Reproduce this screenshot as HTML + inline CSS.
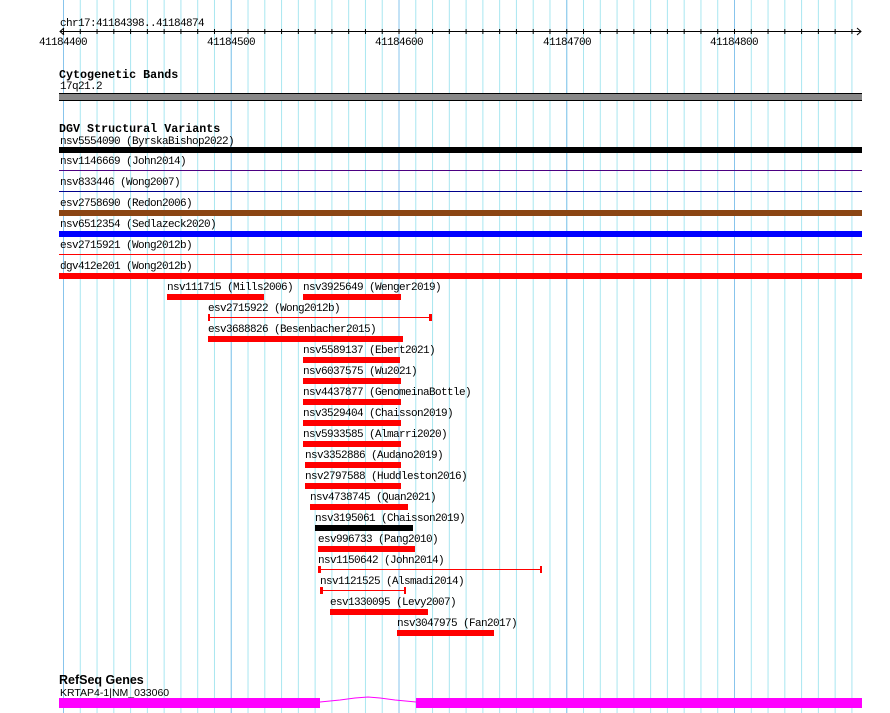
<!DOCTYPE html>
<html><head><meta charset="utf-8"><style>
html,body{margin:0;padding:0;background:#fff;width:890px;height:713px;overflow:hidden}
svg{display:block}
text{font-family:"Liberation Mono",monospace;font-size:11px;letter-spacing:-0.6px;fill:#000}
.b{font-weight:bold;font-size:11.7px;letter-spacing:0}
</style></head><body>
<svg width="890" height="713" viewBox="0 0 890 713" xmlns="http://www.w3.org/2000/svg">
<defs>
<pattern id="g" x="63" y="0" width="16.775" height="713" patternUnits="userSpaceOnUse"><rect x="0" y="0" width="1" height="713" fill="#a8e6f0"/></pattern>
<pattern id="t" x="63" y="0" width="16.775" height="713" patternUnits="userSpaceOnUse"><rect x="0" y="0" width="1" height="713" fill="#000"/></pattern>
</defs>
<rect x="63" y="0" width="799" height="713" fill="url(#g)"/>
<g fill="#88c4ec"><rect x="63" y="0" width="1" height="713"/><rect x="230.75" y="0" width="1" height="713"/><rect x="398.5" y="0" width="1" height="713"/><rect x="566.25" y="0" width="1" height="713"/><rect x="734" y="0" width="1" height="713"/></g>
<text x="60" y="26">chr17:41184398..41184874</text>
<rect x="60" y="31" width="801" height="1" fill="#000"/>
<rect x="63" y="29" width="795" height="5" fill="url(#t)"/>
<path d="M64 28 L60 31.5 L64 35 M857 28 L861 31.5 L857 35" stroke="#000" fill="none"/>
<text x="39" y="45">41184400</text><text x="207" y="45">41184500</text><text x="375" y="45">41184600</text><text x="543" y="45">41184700</text><text x="710" y="45">41184800</text>
<text x="59" y="78" class="b">Cytogenetic Bands</text>
<text x="60" y="89">17q21.2</text>
<rect x="59" y="93" width="803" height="8" fill="#000"/><rect x="59" y="94" width="803" height="6" fill="#888"/>
<text x="59" y="132" class="b">DGV Structural Variants</text>
<text x="60" y="144">nsv5554090 (ByrskaBishop2022)</text>
<rect x="59" y="147" width="803" height="6" fill="#000"/>
<text x="60" y="164">nsv1146669 (John2014)</text>
<rect x="59" y="170" width="803" height="1" fill="#4b0082"/>
<text x="60" y="185">nsv833446 (Wong2007)</text>
<rect x="59" y="191" width="803" height="1" fill="#00008b"/>
<text x="60" y="206">esv2758690 (Redon2006)</text>
<rect x="59" y="210" width="803" height="6" fill="#8b4513"/>
<text x="60" y="227">nsv6512354 (Sedlazeck2020)</text>
<rect x="59" y="231" width="803" height="6" fill="#0000ff"/>
<text x="60" y="248">esv2715921 (Wong2012b)</text>
<rect x="59" y="254" width="803" height="1" fill="#f00"/>
<text x="60" y="269">dgv412e201 (Wong2012b)</text>
<rect x="59" y="273" width="803" height="6" fill="#f00"/>
<g fill="#f00">
<text x="167" y="290">nsv111715 (Mills2006)</text><rect x="167" y="294" width="97" height="6"/>
<text x="303" y="290">nsv3925649 (Wenger2019)</text><rect x="303" y="294" width="98" height="6"/>
<text x="208" y="311">esv2715922 (Wong2012b)</text><rect x="208" y="317" width="223" height="1"/><rect x="208" y="314" width="2" height="7"/><rect x="429" y="314" width="3" height="7"/>
<text x="208" y="332">esv3688826 (Besenbacher2015)</text><rect x="208" y="336" width="195" height="6"/>
<text x="303" y="353">nsv5589137 (Ebert2021)</text><rect x="303" y="357" width="97" height="6"/>
<text x="303" y="374">nsv6037575 (Wu2021)</text><rect x="303" y="378" width="98" height="6"/>
<text x="303" y="395">nsv4437877 (GenomeinaBottle)</text><rect x="303" y="399" width="98" height="6"/>
<text x="303" y="416">nsv3529404 (Chaisson2019)</text><rect x="303" y="420" width="98" height="6"/>
<text x="303" y="437">nsv5933585 (Almarri2020)</text><rect x="303" y="441" width="98" height="6"/>
<text x="305" y="458">nsv3352886 (Audano2019)</text><rect x="305" y="462" width="96" height="6"/>
<text x="305" y="479">nsv2797588 (Huddleston2016)</text><rect x="305" y="483" width="96" height="6"/>
<text x="310" y="500">nsv4738745 (Quan2021)</text><rect x="310" y="504" width="98" height="6"/>
<text x="315" y="521">nsv3195061 (Chaisson2019)</text><rect x="315" y="525" width="98" height="6" fill="#000"/>
<text x="318" y="542">esv996733 (Pang2010)</text><rect x="318" y="546" width="97" height="6"/>
<text x="318" y="563">nsv1150642 (John2014)</text><rect x="318" y="569" width="223" height="1"/><rect x="318" y="566" width="3" height="7"/><rect x="540" y="566" width="2" height="7"/>
<text x="320" y="584">nsv1121525 (Alsmadi2014)</text><rect x="320" y="590" width="85" height="1"/><rect x="320" y="587" width="3" height="7"/><rect x="404" y="587" width="2" height="7"/>
<text x="330" y="605">esv1330095 (Levy2007)</text><rect x="330" y="609" width="98" height="6"/>
<text x="397" y="626">nsv3047975 (Fan2017)</text><rect x="397" y="630" width="97" height="6"/>
</g>
<text x="59" y="684" style="font-family:'Liberation Sans',sans-serif;font-size:12.5px;font-weight:bold;letter-spacing:0">RefSeq Genes</text>
<text x="60" y="696" style="font-family:'Liberation Sans',sans-serif;font-size:10.5px;letter-spacing:0">KRTAP4-1|NM_033060</text>
<rect x="59" y="698" width="261" height="10" fill="#f0f"/>
<rect x="416" y="698" width="446" height="10" fill="#f0f"/>
<path d="M320 702 L340 700 L355 698 L368 697 L380 698 L395 700 L416 702" stroke="#f0f" fill="none"/>
</svg>
</body></html>
